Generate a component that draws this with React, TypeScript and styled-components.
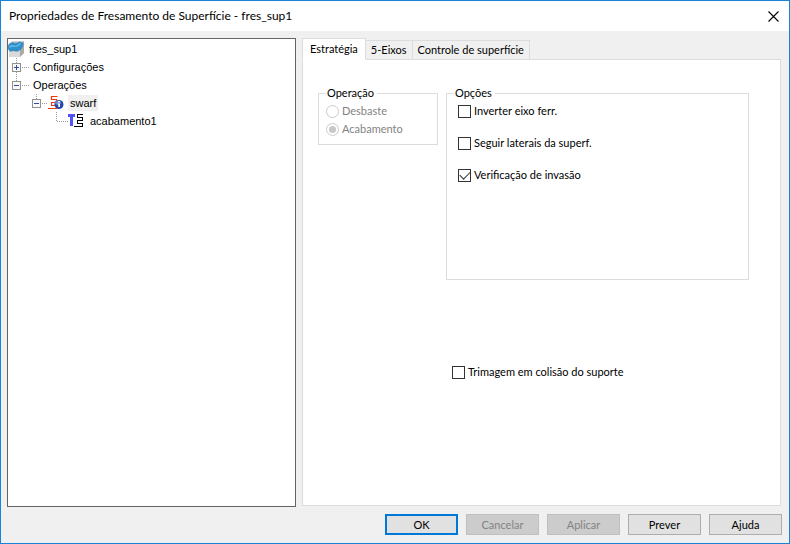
import React, { useState } from "react";
import styled, { createGlobalStyle } from "styled-components";

const GlobalStyle = createGlobalStyle`
  * { box-sizing: border-box; }
  body { margin: 0; }
`;

const Dialog = styled.main`
  display: flex;
  flex-direction: column;
  min-height: 100vh;
  border: 1px solid #1883d7;
  background: #f0f0f0;
  color: #000;
  font-family: Lato, sans-serif;
  font-size: 11px;
  line-height: 18px;
`;

const TitleBar = styled.header`
  display: flex;
  align-items: center;
  justify-content: space-between;
  height: 30px;
  padding: 0 8px;
  background: #fff;
`;

const Title = styled.h1`
  margin: 0;
  font-size: 12px;
  font-weight: 400;
  line-height: 18px;
`;

const CloseButton = styled.button`
  display: flex;
  padding: 2px;
  border: 0;
  background: none;
`;

const Body = styled.div`
  flex: 1;
  display: flex;
  gap: 6px;
  padding: 7px 8px 7px 6px;
`;

const Tree = styled.ul`
  flex: 0 0 38%;
  max-width: 289px;
  margin: 0;
  padding: 1px 0;
  border: 1px solid #646464;
  background: #fff;
  list-style: none;
  font-family: "Liberation Sans", sans-serif;
`;

const TreeRow = styled.li<{ $level?: number }>`
  display: flex;
  align-items: center;
  height: 18px;
  padding-left: ${(p) => (p.$level ?? 0) * 20}px;
  svg { flex: none; }
`;

const TreeLabel = styled.span<{ $selected?: boolean; $gap?: number }>`
  margin-left: ${(p) => p.$gap ?? 0}px;
  padding: 0 2px;
  line-height: 16px;
  white-space: nowrap;
  background: ${(p) => (p.$selected ? "#f0f0f0" : "transparent")};
`;

const Notebook = styled.section`
  flex: 1;
  min-width: 0;
  display: flex;
  flex-direction: column;
  padding-bottom: 1px;
`;

const TabList = styled.div`
  display: flex;
  align-items: flex-end;
  height: 22px;
  margin-bottom: -1px;
`;

const Tab = styled.button<{ $active: boolean }>`
  z-index: ${(p) => (p.$active ? 1 : 0)};
  height: ${(p) => (p.$active ? 22 : 20)}px;
  padding: 0 ${(p) => (p.$active ? 7 : 5)}px;
  border: 1px solid #dcdcdc;
  border-bottom-color: ${(p) => (p.$active ? "#fff" : "#dcdcdc")};
  border-left-width: ${(p) => (p.$active ? 1 : 0)}px;
  background: ${(p) => (p.$active ? "#fff" : "#f0f0f0")};
  color: #000;
  font-family: inherit;
  font-size: 11px;
  line-height: 18px;
  white-space: nowrap;
`;

const Panel = styled.div`
  flex: 1;
  padding: 24px 31px 16px 15px;
  border: 1px solid #dcdcdc;
  background: #fff;
`;

const Groups = styled.div`
  display: grid;
  grid-template-columns: 120px 1fr;
  align-items: start;
  gap: 8px;
`;

const Group = styled.fieldset<{ $height: number }>`
  display: flex;
  flex-direction: column;
  min-width: 0;
  min-height: ${(p) => p.$height}px;
  margin: 0;
  padding: 0 7px 6px;
  border: 1px solid #dcdcdc;
`;

const Legend = styled.legend`
  margin: 0;
  padding: 0 3px 0 1px;
  line-height: 18px;
`;

const OptionStack = styled.div`
  display: flex;
  flex-direction: column;
  gap: 14px;
  padding-left: 4px;
`;

const ChoiceLabel = styled.label<{ $disabled?: boolean }>`
  display: flex;
  align-items: center;
  gap: 3px;
  height: 18px;
  color: ${(p) => (p.$disabled ? "#838383" : "#000")};
  white-space: nowrap;
`;

const CheckInput = styled.input`
  appearance: none;
  flex: none;
  display: grid;
  place-items: center;
  width: 13px;
  height: 13px;
  margin: 0;
  border: 1px solid #333;
  background: #fff;
  &:checked::after {
    content: "";
    width: 9px;
    height: 5px;
    border: solid #333;
    border-width: 0 0 1px 1px;
    transform: translateY(-1px) rotate(-45deg);
  }
`;

const RadioInput = styled.input`
  appearance: none;
  flex: none;
  display: grid;
  place-items: center;
  width: 13px;
  height: 13px;
  margin: 0;
  border: 1px solid #ccc;
  border-radius: 50%;
  background: #fff;
  &:checked::after {
    content: "";
    width: 7px;
    height: 7px;
    border-radius: 50%;
    background: #c8c8c8;
  }
`;

const LowerOptions = styled.div`
  padding: 83px 0 0 134px;
`;

const Footer = styled.footer`
  display: flex;
  justify-content: flex-end;
  gap: 8px;
  padding: 0 7px 8px;
`;

const PushButton = styled.button<{ $primary?: boolean }>`
  width: 73px;
  height: 21px;
  padding: 0;
  border: ${(p) => (p.$primary ? "2px solid #0078d7" : "1px solid #adadad")};
  background: #e1e1e1;
  color: #000;
  font-family: inherit;
  font-size: 11px;
  line-height: 16px;
  &:disabled {
    border-color: #bfbfbf;
    background: #ccc;
    color: #838383;
  }
`;

type BranchProps = { width: number; open?: boolean; above?: boolean; below?: boolean };

function Branch({ width, open, above, below }: BranchProps) {
  return (
    <svg width={width} height="18" shapeRendering="crispEdges" aria-hidden="true">
      <g stroke="#999" strokeDasharray="1 1">
        {above && <path d="M8.5 0V5" />}
        {below && <path d="M8.5 14V18" />}
        <path d={`M14 9.5H${width - 1}`} />
      </g>
      <rect x="4.5" y="5.5" width="8" height="8" fill="#f8f8f8" stroke="#919191" />
      <path d={open ? "M6 9.5H11" : "M6 9.5H11M8.5 7V12"} stroke="#354ba0" />
    </svg>
  );
}

function LeafBranch() {
  return (
    <svg width="20" height="18" shapeRendering="crispEdges" aria-hidden="true">
      <path d="M8.5 0V9.5H20" fill="none" stroke="#999" strokeDasharray="1 1" />
    </svg>
  );
}

function SurfaceIcon() {
  return (
    <svg width="17" height="18" viewBox="0 0 17 18" aria-hidden="true">
      <path d="M1 5L4 1H16V13L12 17H1Z" fill="#cfcfcf" />
      <path d="M12 6L16 1V13L12 17Z" fill="#a9a9a9" />
      <path d="M1 6H12V17H1Z" fill="#d9d9d9" />
      <path d="M0 7C0 4 3 2 6 3C9 4 10 2 12 2L15 3C15 7 13 10 10 11C8 12 6 10 4 11C2 12 0 10 0 7Z" fill="#2f91cc" stroke="#2779ad" strokeWidth=".5" />
      <path d="M1 7C3 3 6 6 8 5.500S11 3 13 3C12 6 9 7 7 7S4 6 2 8Z" fill="#62b6e6" />
    </svg>
  );
}

function SwarfIcon() {
  return (
    <svg width="16" height="18" viewBox="0 0 16 18" shapeRendering="geometricPrecision" aria-hidden="true">
      <path d="M9.500 2.500H3.500V5.500H8.500V8.500H3.500V11.500H8.500V14.500H0" fill="none" stroke="#f33a0b" strokeWidth="1.2" />
      <circle cx="11" cy="10.500" r="4.500" fill="#2747a5" />
      <ellipse cx="10" cy="8.500" rx="3" ry="2" fill="#6b87d5" />
      <path d="M10 7H12V8.300H10ZM9.500 9.500H12V13H10.300V10.500H9.500Z" fill="#fff" />
    </svg>
  );
}

function FinishIcon() {
  return (
    <svg width="17" height="18" viewBox="0 0 17 18" shapeRendering="crispEdges" aria-hidden="true">
      <path d="M0 2H7V5H5V14H2V5H0Z" fill="#5454ff" />
      <path d="M15 2.500H9.500V5.500H14.500V8.500H9.500V11.500H14.500V14.500H6" fill="none" stroke="#000" />
    </svg>
  );
}

function Check({ label, initial = false }: { label: string; initial?: boolean }) {
  const [checked, setChecked] = useState(initial);
  return (
    <ChoiceLabel>
      <CheckInput type="checkbox" checked={checked} onChange={() => setChecked(!checked)} />
      {label}
    </ChoiceLabel>
  );
}

const tabs = ["Estratégia", "5-Eixos", "Controle de superfície"];

export default function App() {
  return (
    <>
      <GlobalStyle />
      <Dialog>
        <TitleBar>
          <Title>Propriedades de Fresamento de Superfície - fres_sup1</Title>
          <CloseButton aria-label="Fechar">
            <svg width="11" height="11" viewBox="0 0 11 11" aria-hidden="true">
              <path d="M.5 .5L10.5 10.5M10.5 .5L.5 10.5" stroke="#000" strokeWidth="1.1" />
            </svg>
          </CloseButton>
        </TitleBar>
        <Body>
          <Tree role="tree">
            <TreeRow role="treeitem"><SurfaceIcon /><TreeLabel $gap={2}>fres_sup1</TreeLabel></TreeRow>
            <TreeRow role="treeitem"><Branch width={23} above below /><TreeLabel>Configurações</TreeLabel></TreeRow>
            <TreeRow role="treeitem"><Branch width={23} open above /><TreeLabel>Operações</TreeLabel></TreeRow>
            <TreeRow role="treeitem" $level={1}><Branch width={20} open above /><SwarfIcon /><TreeLabel $gap={4} $selected>swarf</TreeLabel></TreeRow>
            <TreeRow role="treeitem" $level={2}><LeafBranch /><FinishIcon /><TreeLabel $gap={3}>acabamento1</TreeLabel></TreeRow>
          </Tree>
          <Notebook>
            <TabList role="tablist">
              {tabs.map((tab, index) => (
                <Tab key={tab} role="tab" aria-selected={index === 0} $active={index === 0}>{tab}</Tab>
              ))}
            </TabList>
            <Panel role="tabpanel">
              <Groups>
                <Group $height={61}>
                  <Legend>Operação</Legend>
                  <ChoiceLabel $disabled><RadioInput type="radio" name="operacao" disabled />Desbaste</ChoiceLabel>
                  <ChoiceLabel $disabled><RadioInput type="radio" name="operacao" disabled defaultChecked />Acabamento</ChoiceLabel>
                </Group>
                <Group $height={196}>
                  <Legend>Opções</Legend>
                  <OptionStack>
                    <Check label="Inverter eixo ferr." />
                    <Check label="Seguir laterais da superf." />
                    <Check label="Verificação de invasão" initial />
                  </OptionStack>
                </Group>
              </Groups>
              <LowerOptions>
                <Check label="Trimagem em colisão do suporte" />
              </LowerOptions>
            </Panel>
          </Notebook>
        </Body>
        <Footer>
          <PushButton $primary>OK</PushButton>
          <PushButton disabled>Cancelar</PushButton>
          <PushButton disabled>Aplicar</PushButton>
          <PushButton>Prever</PushButton>
          <PushButton>Ajuda</PushButton>
        </Footer>
      </Dialog>
    </>
  );
}
